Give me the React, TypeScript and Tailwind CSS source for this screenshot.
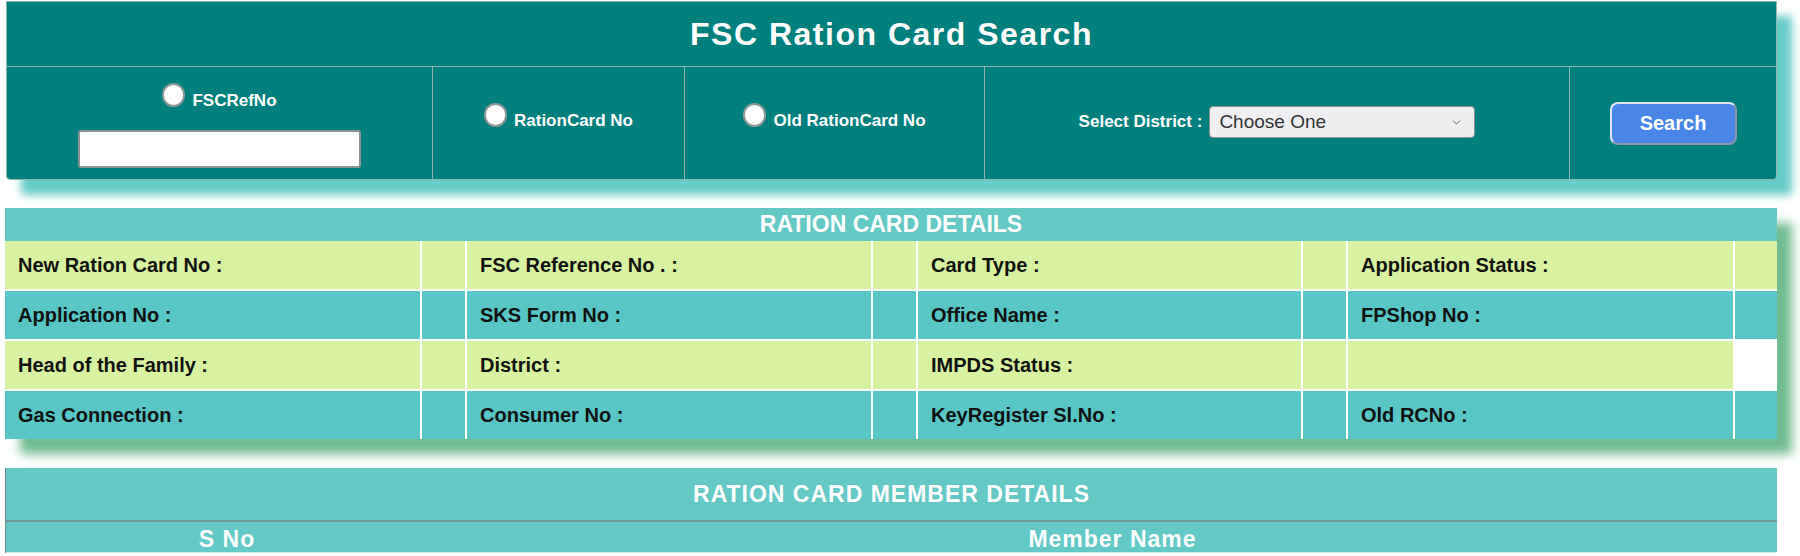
import { ChevronDown } from "lucide-react";

const detailRows: { label: string; tone: "green" | "teal"; cells: string[]; short?: boolean }[] = [
  { label: "r1", tone: "green", cells: ["New Ration Card No :", "FSC Reference No . :", "Card Type :", "Application Status :"] },
  { label: "r2", tone: "teal", cells: ["Application No :", "SKS Form No :", "Office Name :", "FPShop No :"] },
  { label: "r3", tone: "green", cells: ["Head of the Family :", "District :", "IMPDS Status :", ""], short: true },
  { label: "r4", tone: "teal", cells: ["Gas Connection :", "Consumer No :", "KeyRegister Sl.No :", "Old RCNo :"] },
];

const Radio = ({ label }: { label: string }) => (
  <label className="flex items-end gap-[7px] cursor-pointer">
    <input
      type="radio"
      name="searchBy"
      className="appearance-none m-0 w-[23px] h-[24px] rounded-full bg-white border-2 border-[#8c9797] shrink-0"
    />
    <span className="text-[17px] font-bold text-white leading-none mb-[-2px]">{label}</span>
  </label>
);

export default function App() {
  return (
    <div className="w-[1800px] h-[556px] overflow-hidden bg-white pl-[5px] pr-[23px] font-['Liberation_Sans',Arial,sans-serif]">
      {/* Search panel */}
      <div className="ml-px mt-px rounded-b-[4px] border border-[#8fb3b0] bg-[#00807d] shadow-[15px_15px_8px_#66ccc8]">
        <div className="h-[65px] flex items-center justify-center border-b border-[#8fb3b0]">
          <h1 className="text-[32px] font-bold text-white tracking-[1.5px] leading-none">FSC Ration Card Search</h1>
        </div>
        <div className="h-[112px] grid grid-cols-[425px_252px_300px_585px_1fr]">
          <div className="flex flex-col items-center pt-[16px]">
            <Radio label="FSCRefNo" />
            <input
              type="text"
              className="mt-[23px] w-[283px] h-[38px] rounded-[3px] bg-white border-2 border-[#8a9393] outline-none"
            />
          </div>
          <div className="border-l border-[#8fb3b0] flex items-start justify-center pt-[36px]">
            <Radio label="RationCard No" />
          </div>
          <div className="border-l border-[#8fb3b0] flex items-start justify-center pt-[36px]">
            <Radio label="Old RationCard No" />
          </div>
          <div className="border-l border-[#8fb3b0] flex items-center justify-center gap-[7px] pb-[2px]">
            <span className="text-[17px] font-bold text-white">Select District :</span>
            <div className="relative">
              <select className="appearance-none w-[266px] h-[32px] rounded-[4px] bg-[#efeff2] border border-[#8d8d92] pl-[9px] text-[19px] text-[#333] outline-none">
                <option>Choose One</option>
              </select>
              <ChevronDown className="absolute right-[12px] top-[10px] text-[#444] pointer-events-none" size={13} strokeWidth={1.6} />
            </div>
          </div>
          <div className="border-l border-[#8fb3b0] flex items-center justify-center">
            <button className="w-[127px] h-[43px] rounded-[8px] bg-[#4a86e8] border-2 border-t-[#dfe5ef] border-l-[#dfe5ef] border-b-[#8e97a6] border-r-[#8e97a6] text-white text-[20px] font-bold">
              Search
            </button>
          </div>
        </div>
      </div>

      {/* Ration card details */}
      <div className="mt-[28px] bg-white shadow-[15px_15px_10px_#70bb8f]">
        <div className="h-[33px] bg-[#64c9c5] flex items-center justify-center">
          <h2 className="text-[23px] font-bold text-white leading-none">RATION CARD DETAILS</h2>
        </div>
        <div className="grid grid-cols-[415px_43px_404px_43px_383px_43px_385px_42px] auto-rows-[48px] gap-[2px] bg-white">
          {detailRows.map((row) => {
            const bg = row.tone === "green" ? "bg-[#d9f2a1]" : "bg-[#58c6c5]";
            return row.cells.flatMap((text, i) => {
              const last = i === row.cells.length - 1;
              return [
                <div key={`${row.label}-l${i}`} className={`${bg} flex items-center pl-[13px] text-[20px] font-bold text-[#111]`}>
                  {text}
                </div>,
                <div key={`${row.label}-v${i}`} className={last && row.short ? "bg-white" : bg} />,
              ];
            });
          })}
        </div>
      </div>

      {/* Member details */}
      <div className="mt-[29px] border-l border-[#6e8c8a]">
        <div className="h-[54px] bg-[#64c9c5] flex items-center justify-center border-b-2 border-[#6f9896]">
          <h2 className="text-[23px] font-bold text-white tracking-[1px] leading-none">RATION CARD MEMBER DETAILS</h2>
        </div>
        <div className="h-[31px] grid grid-cols-[442px_1fr] bg-[#62c9c6] border-b border-[#cdeeee]">
          <div className="flex items-center justify-center text-[23px] font-bold text-white tracking-[1px]">S No</div>
          <div className="flex items-center justify-center text-[23px] font-bold text-white tracking-[1px]">Member Name</div>
        </div>
      </div>
    </div>
  );
}
